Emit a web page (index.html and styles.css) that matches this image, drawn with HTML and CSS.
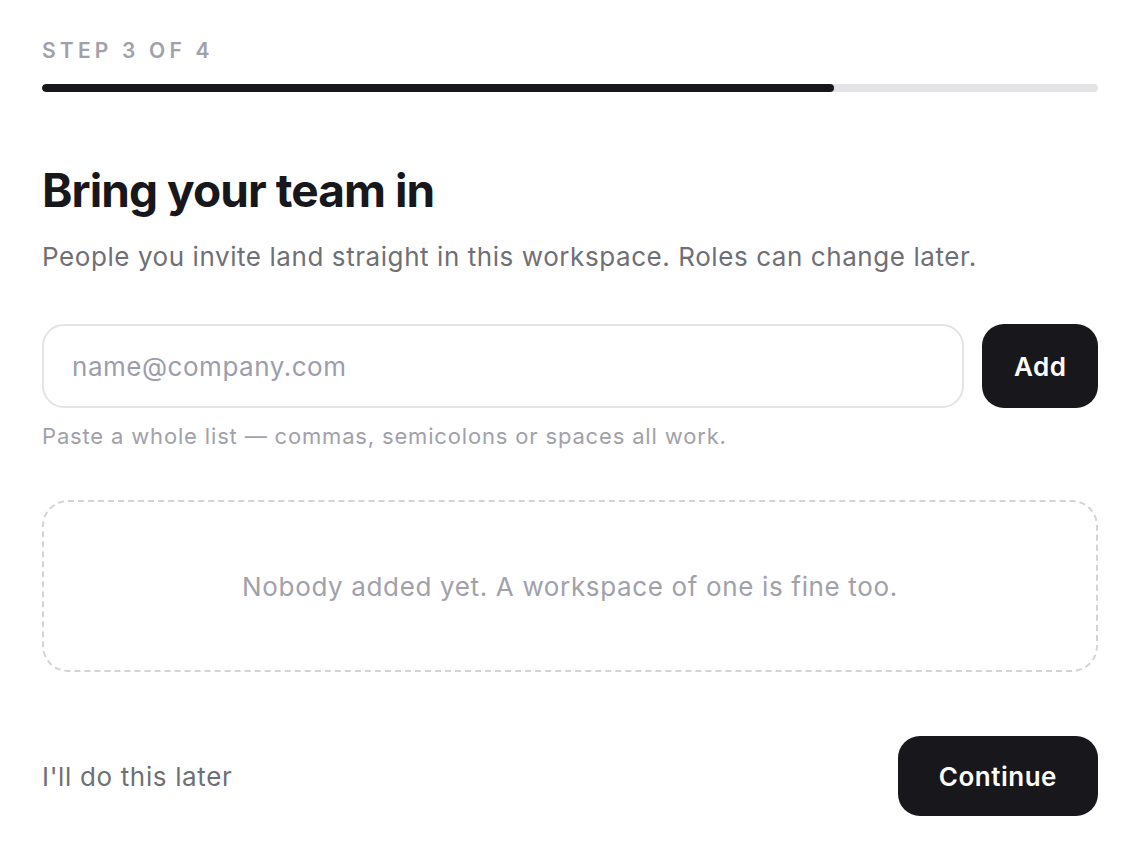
FILE: index.html
```html
<!DOCTYPE html>
<html lang="en">
<head>
    <meta charset="UTF-8">
    <meta name="viewport" content="width=device-width, initial-scale=1.0">
    <title>Invite your team</title>
    <link rel="stylesheet" href="styles.css">
</head>
<body>
    <main class="onboarding">
        <div class="step-label">Step 3 of 4</div>
        <div class="progress"><div class="progress-fill" style="width: 75%"></div></div>

        <h1 class="title">Bring your team in</h1>
        <p class="subtitle">People you invite land straight in this workspace. Roles can change later.</p>

        <form class="invite-row" onsubmit="return false">
            <input class="invite-input" type="text" placeholder="name@company.com">
            <button class="btn" type="submit">Add</button>
        </form>
        <p class="hint">Paste a whole list — commas, semicolons or spaces all work.</p>

        <div class="empty-list">Nobody added yet. A workspace of one is fine too.</div>

        <div class="footer">
            <a class="skip" href="#">I'll do this later</a>
            <button class="btn btn-large" type="button">Continue</button>
        </div>
    </main>
</body>
</html>
```

FILE: styles.css
```css
:root {
    --ink: #18171b;
    --muted: #6f6f76;
    --faint: #a1a1aa;
    --line: #e4e4e7;
}
body {
    margin: 0;
    background-color: white;
    color: var(--ink);
    font-family: Inter, "Noto Sans", sans-serif;
    letter-spacing: 0.02em;
}
.onboarding {
    width: 1056px;
    padding: 38px 0 40px 42px;
}
.step-label {
    font-size: 21px;
    line-height: 25px;
    font-weight: 600;
    letter-spacing: 0.2em;
    text-transform: uppercase;
    color: var(--faint);
}
.progress {
    margin-top: 21px;
    height: 8px;
    border-radius: 4px;
    background-color: var(--line);
    overflow: hidden;
}
.progress-fill {
    height: 100%;
    border-radius: 4px;
    background-color: var(--ink);
}
.title {
    margin: 70px 0 0;
    font-size: 46px;
    line-height: 56px;
    font-weight: 700;
    letter-spacing: -0.02em;
}
.subtitle {
    margin: 22px 0 0;
    font-size: 26px;
    line-height: 34px;
    letter-spacing: 0.022em;
    color: var(--muted);
}
.invite-row {
    display: flex;
    gap: 18px;
    margin-top: 50px;
}
.invite-input {
    flex: 1;
    height: 84px;
    box-sizing: border-box;
    padding: 0 28px;
    border: 2px solid var(--line);
    border-radius: 22px;
    font-family: inherit;
    font-size: 26px;
    letter-spacing: 0.02em;
    color: var(--ink);
    outline: none;
}
.invite-input::placeholder {
    color: #9d9dab;
}
.btn {
    height: 84px;
    padding: 0 31.5px;
    border: none;
    border-radius: 22px;
    background-color: var(--ink);
    color: white;
    font-family: inherit;
    font-size: 26px;
    font-weight: 600;
    letter-spacing: 0.02em;
    cursor: pointer;
}
.hint {
    margin: 14px 0 0;
    font-size: 22px;
    line-height: 28px;
    letter-spacing: 0.038em;
    color: var(--faint);
}
.empty-list {
    margin-top: 50px;
    height: 172px;
    box-sizing: border-box;
    border: 2px dashed #d4d4d8;
    border-radius: 26px;
    display: flex;
    align-items: center;
    justify-content: center;
    font-size: 26px;
    letter-spacing: 0.025em;
    color: var(--faint);
}
.footer {
    margin-top: 64px;
    display: flex;
    align-items: center;
    justify-content: space-between;
}
.skip {
    font-size: 26px;
    letter-spacing: 0.025em;
    color: var(--muted);
    text-decoration: none;
}
.btn-large {
    height: 80px;
    padding: 0 41px;
}
```
